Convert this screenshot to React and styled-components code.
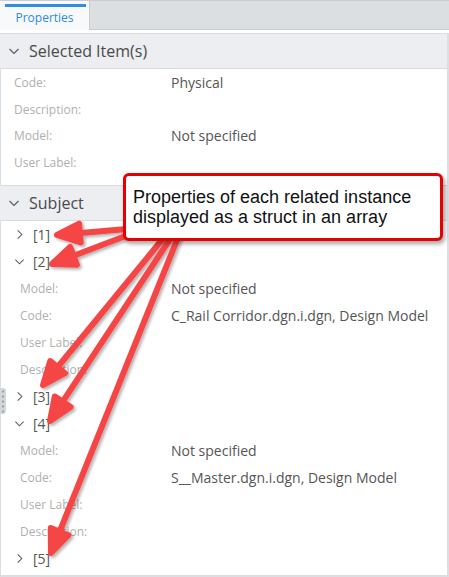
import React from "react";
import styled, { createGlobalStyle } from "styled-components";

const GlobalStyle = createGlobalStyle`
  html, body {
    margin: 0;
    padding: 0;
    background: #fff;
  }
  body {
    font-family: "Open Sans", "Liberation Sans", sans-serif;
  }
`;

const Panel = styled.div`
  position: relative;
  width: 449px;
  height: 577px;
  overflow: hidden;
  display: flex;
  flex-direction: column;
  background: #fff;
`;

const TabBar = styled.div`
  flex: none;
  height: 30px;
  box-sizing: border-box;
  display: flex;
  background: #dcdfe2;
  border-top: 1px solid #c9cdd1;
  border-bottom: 1px solid #c9cdd1;
`;

const Tab = styled.div`
  position: relative;
  width: 90px;
  margin-bottom: -1px;
  box-sizing: border-box;
  display: flex;
  align-items: center;
  justify-content: center;
  padding-top: 3px;
  background: #f8f9fa;
  border-right: 1px solid #c9cdd1;
  color: #2f8ae0;
  font-size: 12px;

  &::before {
    content: "";
    position: absolute;
    top: 3px;
    left: 5px;
    right: 3px;
    height: 3px;
    background: #2f8de4;
  }
`;

const Content = styled.div`
  flex: 1;
  margin-top: 3px;
  box-sizing: border-box;
  border-left: 1px solid #dcdfe2;
  border-right: 2px solid #dcdfe2;
  border-bottom: 2px solid #dcdfe2;
  display: flex;
  flex-direction: column;
`;

const Section = styled.section`
  padding-bottom: ${(p) => p.$pad || 0}px;
`;

const SectionHeader = styled.div`
  height: 36px;
  box-sizing: border-box;
  display: flex;
  align-items: center;
  gap: 9px;
  padding-left: 8px;
  margin-left: -1px;
  background: #eceef1;
  border-top: 1px solid #d8dbdf;
  border-bottom: 1px solid #d8dbdf;
  color: #4a4a4a;
  font-size: 16px;
`;

const ChevronSvg = styled.svg`
  flex: none;
  width: ${(p) => p.$size}px;
  height: ${(p) => p.$size}px;
  fill: none;
  stroke: #5c5c5c;
  stroke-width: 1.15;
`;

const Row = styled.div`
  display: grid;
  grid-template-columns: ${(p) => 170 - p.$indent}px 1fr;
  align-items: center;
  height: ${(p) => p.$h}px;
  padding-left: ${(p) => p.$indent}px;
`;

const Label = styled.span`
  color: #b0b0b0;
  font-size: 12px;
  white-space: nowrap;
`;

const Value = styled.span`
  color: #555;
  font-size: 14px;
  white-space: nowrap;
`;

const ItemRow = styled.div`
  display: flex;
  align-items: center;
  gap: 8px;
  height: 27px;
  padding-left: 13px;
  color: #555;
  font-size: 14px;
`;

const DragHandle = styled.div`
  position: absolute;
  left: 0;
  top: 388px;
  width: 6px;
  height: 26px;
  border-radius: 0 3px 3px 0;
  background-color: #d3d6da;
  background-image: radial-gradient(circle, #9a9ea3 0.9px, transparent 1.3px);
  background-size: 6px 5px;
  background-position: 0 1px;
`;

const Arrows = styled.svg`
  position: absolute;
  left: 0;
  top: 0;
  width: 449px;
  height: 577px;
  pointer-events: none;
`;

const Callout = styled.div`
  position: absolute;
  left: 123px;
  top: 173px;
  width: 320px;
  height: 68px;
  box-sizing: border-box;
  padding: 11px 7px;
  background: #fff;
  border: 3px solid #e60000;
  border-radius: 6px;
  box-shadow: 2px 3px 4px rgba(0, 0, 0, 0.35);
  font-family: "Liberation Sans", Arial, sans-serif;
  font-size: 18px;
  line-height: 20px;
  color: #111;
`;

const Chevron = ({ open, size }) => (
  <ChevronSvg viewBox="0 0 12 12" $size={size}>
    <polyline points={open ? "1.5,4 6,8.5 10.5,4" : "4,1.5 8.5,6 4,10.5"} />
  </ChevronSvg>
);

const Arrow = ({ from, to }) => {
  const dx = to[0] - from[0];
  const dy = to[1] - from[1];
  const len = Math.hypot(dx, dy);
  const ux = dx / len;
  const uy = dy / len;
  const L = 23;
  const W = 9.5;
  const bx = to[0] - ux * L;
  const by = to[1] - uy * L;
  const pts = [
    [to[0], to[1]],
    [bx - uy * W, by + ux * W],
    [bx + uy * W, by - ux * W],
  ]
    .map((p) => p.join(","))
    .join(" ");
  return (
    <g>
      <line x1={from[0]} y1={from[1]} x2={bx + ux * 2} y2={by + uy * 2} />
      <polygon points={pts} />
    </g>
  );
};

const selected = [
  ["Code:", "Physical"],
  ["Description:", ""],
  ["Model:", "Not specified"],
  ["User Label:", ""],
];

const subject = [
  { id: 1 },
  {
    id: 2,
    props: [
      ["Model:", "Not specified"],
      ["Code:", "C_Rail Corridor.dgn.i.dgn, Design Model"],
      ["User Label:", ""],
      ["Description:", ""],
    ],
  },
  { id: 3 },
  {
    id: 4,
    props: [
      ["Model:", "Not specified"],
      ["Code:", "S__Master.dgn.i.dgn, Design Model"],
      ["User Label:", ""],
      ["Description:", ""],
    ],
  },
  { id: 5 },
];

const arrows = [
  [[150, 227], [57, 235]],
  [[165, 221], [52, 264]],
  [[170, 230], [43, 385]],
  [[176, 230], [50, 421]],
  [[181, 230], [51, 553]],
];

export default function App() {
  return (
    <>
      <GlobalStyle />
      <Panel>
        <TabBar>
          <Tab>Properties</Tab>
        </TabBar>
        <Content>
          <Section $pad={9}>
            <SectionHeader>
              <Chevron open size={12} />
              Selected Item(s)
            </SectionHeader>
            {selected.map(([k, v]) => (
              <Row key={k} $indent={13} $h={26.7}>
                <Label>{k}</Label>
                <Value>{v}</Value>
              </Row>
            ))}
          </Section>
          <Section>
            <SectionHeader>
              <Chevron open size={12} />
              Subject
            </SectionHeader>
            {subject.map((item) => (
              <React.Fragment key={item.id}>
                <ItemRow>
                  <Chevron open={!!item.props} size={11} />
                  [{item.id}]
                </ItemRow>
                {item.props &&
                  item.props.map(([k, v]) => (
                    <Row key={k} $indent={19} $h={27}>
                      <Label>{k}</Label>
                      <Value>{v}</Value>
                    </Row>
                  ))}
              </React.Fragment>
            ))}
          </Section>
        </Content>
        <DragHandle />
        <Arrows viewBox="0 0 449 577">
          <defs>
            <filter id="shadow" x="-20%" y="-20%" width="140%" height="140%">
              <feDropShadow dx="2" dy="2" stdDeviation="1.5" floodColor="#000" floodOpacity="0.3" />
            </filter>
          </defs>
          <g fill="#f54545" stroke="#f54545" strokeWidth="6" strokeLinejoin="round" filter="url(#shadow)">
            {arrows.map(([from, to], i) => (
              <Arrow key={i} from={from} to={to} />
            ))}
          </g>
        </Arrows>
        <Callout>
          Properties of each related instance
          <br />
          displayed as a struct in an array
        </Callout>
      </Panel>
    </>
  );
}
